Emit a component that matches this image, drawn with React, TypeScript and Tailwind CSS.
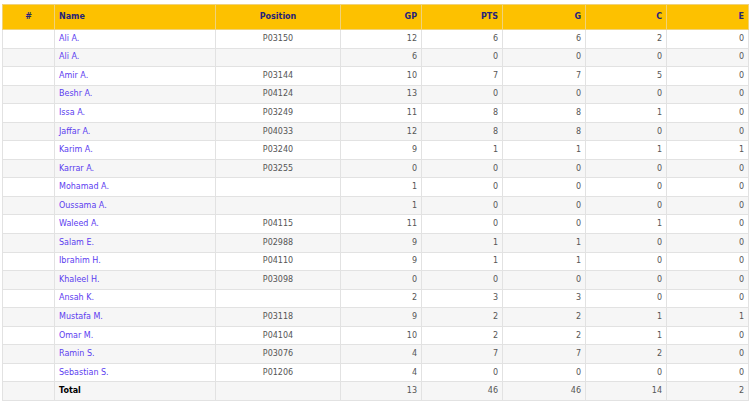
const rows: [string, string, number, number, number, number, number][] = [
  ['Ali A.', 'P03150', 12, 6, 6, 2, 0],
  ['Ali A.', '', 6, 0, 0, 0, 0],
  ['Amir A.', 'P03144', 10, 7, 7, 5, 0],
  ['Beshr A.', 'P04124', 13, 0, 0, 0, 0],
  ['Issa A.', 'P03249', 11, 8, 8, 1, 0],
  ['Jaffar A.', 'P04033', 12, 8, 8, 0, 0],
  ['Karim A.', 'P03240', 9, 1, 1, 1, 1],
  ['Karrar A.', 'P03255', 0, 0, 0, 0, 0],
  ['Mohamad A.', '', 1, 0, 0, 0, 0],
  ['Oussama A.', '', 1, 0, 0, 0, 0],
  ['Waleed A.', 'P04115', 11, 0, 0, 1, 0],
  ['Salam E.', 'P02988', 9, 1, 1, 0, 0],
  ['Ibrahim H.', 'P04110', 9, 1, 1, 0, 0],
  ['Khaleel H.', 'P03098', 0, 0, 0, 0, 0],
  ['Ansah K.', '', 2, 3, 3, 0, 0],
  ['Mustafa M.', 'P03118', 9, 2, 2, 1, 1],
  ['Omar M.', 'P04104', 10, 2, 2, 1, 0],
  ['Ramin S.', 'P03076', 4, 7, 7, 2, 0],
  ['Sebastian S.', 'P01206', 4, 0, 0, 0, 0],
];

export default function App() {
  const cell = 'border border-[#e2e2e2] px-[4px] leading-none';
  return (
    <div className="bg-white w-[750px] h-[404px] pt-[4px] pl-[2px] font-['DejaVu_Sans',Verdana,sans-serif] text-[8px] text-[#555]">
      <table className="border-collapse w-[746px] table-fixed">
        <colgroup>
          <col className="w-[52px]" />
          <col className="w-[161px]" />
          <col className="w-[125px]" />
          <col className="w-[81px]" />
          <col className="w-[81px]" />
          <col className="w-[83px]" />
          <col className="w-[81px]" />
          <col className="w-[82px]" />
        </colgroup>
        <thead>
          <tr className="h-[25px] bg-[#fdc100] text-[#26237a] font-bold">
            <th className={`${cell} border-[#f0d27a] text-center`}>#</th>
            <th className={`${cell} border-[#f0d27a] text-left`}>Name</th>
            <th className={`${cell} border-[#f0d27a] text-center`}>Position</th>
            <th className={`${cell} border-[#f0d27a] text-right`}>GP</th>
            <th className={`${cell} border-[#f0d27a] text-right`}>PTS</th>
            <th className={`${cell} border-[#f0d27a] text-right`}>G</th>
            <th className={`${cell} border-[#f0d27a] text-right`}>C</th>
            <th className={`${cell} border-[#f0d27a] text-right`}>E</th>
          </tr>
        </thead>
        <tbody>
          {rows.map((r, i) => (
            <tr key={i} className={`h-[18.55px] ${i % 2 === 1 ? 'bg-[#f6f6f6]' : 'bg-white'}`}>
              <td className={cell}></td>
              <td className={`${cell} text-[#5b3cf0]`}>{r[0]}</td>
              <td className={`${cell} text-center`}>{r[1]}</td>
              <td className={`${cell} text-right`}>{r[2]}</td>
              <td className={`${cell} text-right`}>{r[3]}</td>
              <td className={`${cell} text-right`}>{r[4]}</td>
              <td className={`${cell} text-right`}>{r[5]}</td>
              <td className={`${cell} text-right`}>{r[6]}</td>
            </tr>
          ))}
          <tr className="h-[18.55px] bg-[#f6f6f6]">
            <td className={cell}></td>
            <td className={`${cell} text-black font-bold`}>Total</td>
            <td className={cell}></td>
            <td className={`${cell} text-right`}>13</td>
            <td className={`${cell} text-right`}>46</td>
            <td className={`${cell} text-right`}>46</td>
            <td className={`${cell} text-right`}>14</td>
            <td className={`${cell} text-right`}>2</td>
          </tr>
        </tbody>
      </table>
    </div>
  );
}
